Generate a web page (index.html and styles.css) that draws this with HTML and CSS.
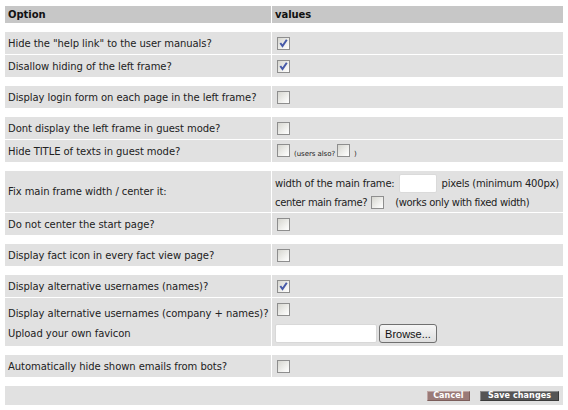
FILE: index.html
```html
<!DOCTYPE html>
<html lang="en">
<head>
<meta charset="UTF-8">
<title>Options</title>
<link rel="stylesheet" href="styles.css">
</head>
<body>

<form id="optionsForm">
<table class="settings">
    <colgroup><col class="col-opt"><col></colgroup>
    <tr class="head"><th>Option</th><th>values</th></tr>
    <tr class="gap"><td colspan="2"></td></tr>
    <tr><td>Hide the "help link" to the user manuals?</td><td><input type="checkbox" checked></td></tr>
    <tr><td>Disallow hiding of the left frame?</td><td><input type="checkbox" checked></td></tr>
    <tr class="gap"><td colspan="2"></td></tr>
    <tr><td>Display login form on each page in the left frame?</td><td><input type="checkbox"></td></tr>
    <tr class="gap"><td colspan="2"></td></tr>
    <tr><td>Dont display the left frame in guest mode?</td><td><input type="checkbox"></td></tr>
    <tr><td>Hide TITLE of texts in guest mode?</td><td><input type="checkbox"><span class="tiny">(users also?</span><input type="checkbox" class="cb-tiny"><span class="tiny">)</span></td></tr>
    <tr class="gap"><td colspan="2"></td></tr>
    <tr>
        <td>Fix main frame width / center it:</td>
        <td class="stack stack-frame">
            <div class="line line-width">width of the main frame:<input type="text" class="num">pixels (minimum 400px)</div>
            <div class="line line-short">center main frame?<input type="checkbox" class="cb-inline"><span class="hint">(works only with fixed width)</span></div>
        </td>
    </tr>
    <tr><td>Do not center the start page?</td><td><input type="checkbox"></td></tr>
    <tr class="gap"><td colspan="2"></td></tr>
    <tr><td>Display fact icon in every fact view page?</td><td><input type="checkbox"></td></tr>
    <tr class="gap"><td colspan="2"></td></tr>
    <tr><td>Display alternative usernames (names)?</td><td><input type="checkbox" checked></td></tr>
    <tr>
        <td class="stack">
            <div class="line">Display alternative usernames (company + names)?</div>
            <div class="line line-upload">Upload your own favicon</div>
        </td>
        <td class="stack">
            <div class="line"><input type="checkbox"></div>
            <div class="line line-file"><input type="text" class="file-name"><button type="button" class="browse">Browse...</button></div>
        </td>
    </tr>
    <tr class="gap"><td colspan="2"></td></tr>
    <tr><td>Automatically hide shown emails from bots?</td><td><input type="checkbox"></td></tr>
    <tr class="gap"><td colspan="2"></td></tr>
    <tr class="actions">
        <td colspan="2">
            <button type="reset" class="btn btn-cancel">Cancel</button>
            <button type="submit" class="btn btn-save">Save changes</button>
        </td>
    </tr>
</table>
</form>

</body>
</html>
```

FILE: styles.css
```css
body {
    margin: 5px 4px;
    font-family: "DejaVu Sans", Verdana, sans-serif;
    font-size: 10px;
    letter-spacing: -0.06px;
    color: #222;
    background: #fff;
}
.settings {
    width: 100%;
    table-layout: fixed;
    border-collapse: separate;
    border-spacing: 1px;
}
.col-opt {
    width: 266px;
}
.settings th,
.settings td {
    padding: 0 3px;
    background: #e1e1e1;
    text-align: left;
    vertical-align: middle;
    white-space: nowrap;
    height: 22px;
}
.settings .head th {
    background: #c7c7c7;
    color: #111;
    font-weight: bold;
    height: 17px;
}
.settings .gap td {
    background: none;
    height: 7px;
    padding: 0;
}

/* checkboxes drawn like the old grey ones */
input[type="checkbox"] {
    appearance: none;
    -webkit-appearance: none;
    box-sizing: border-box;
    width: 13px;
    height: 13px;
    margin: 0 0 0 2px;
    border: 1px solid #8e8e8e;
    background: linear-gradient(135deg, #d6d6d0 0%, #f4f4f2 70%, #fff 100%);
    vertical-align: middle;
}
input[type="checkbox"]:checked {
    background-image: url("data:image/svg+xml,%3Csvg xmlns='http://www.w3.org/2000/svg' width='11' height='11'%3E%3Cpolyline points='2.3,5 4.5,8 8.8,1.8' fill='none' stroke='%234659a8' stroke-width='2'/%3E%3C/svg%3E"),
        linear-gradient(135deg, #d6d6d0 0%, #f4f4f2 70%, #fff 100%);
}
.tiny {
    font-size: 7px;
    margin-left: 4px;
    vertical-align: -2px;
}
.cb-tiny {
    margin-left: 5px;
}

.stack {
    vertical-align: top;
}
.settings td.stack-frame {
    vertical-align: top;
    padding-top: 2px;
}
.line {
    display: flex;
    align-items: center;
    height: 22px;
}
.stack-frame .line {
    height: 20px;
}
.stack-frame .line-width {
    letter-spacing: -0.2px;
}
.stack-frame .line-short {
    height: 19px;
    letter-spacing: -0.35px;
}
.line-upload {
    height: 18px;
}
.line-file {
    height: 26px;
    align-items: flex-start;
    padding-top: 4px;
    box-sizing: border-box;
}

.num {
    box-sizing: border-box;
    width: 38px;
    height: 19px;
    margin: 0 5px 0 4px;
    border: 1px solid #dadada;
    border-radius: 2px;
    background: #fff;
}
.cb-inline {
    margin: 0 0 0 4px !important;
}
.hint {
    margin-left: 11px;
}
.file-name {
    box-sizing: border-box;
    width: 102px;
    height: 19px;
    margin: 0 2px 0 0;
    border: 1px solid #d8d8d8;
    border-radius: 2px;
    background: #fff;
}
.browse {
    box-sizing: border-box;
    width: 58px;
    height: 19px;
    padding: 0;
    border: 1px solid #707070;
    border-radius: 3px;
    background: linear-gradient(#f6f6f6, #dedede);
    font-family: "Liberation Sans", Arial, sans-serif;
    font-size: 11px;
    letter-spacing: 0;
    color: #111;
}

.settings .actions td {
    height: 19px;
    text-align: right;
    padding: 0 4px 0 0;
}
.btn {
    box-sizing: border-box;
    height: 10px;
    padding: 0;
    border: 1px solid;
    font-family: "DejaVu Sans", Verdana, sans-serif;
    font-size: 8px;
    font-weight: bold;
    line-height: 8px;
    letter-spacing: 0.1px;
    color: #fff;
    vertical-align: middle;
    cursor: pointer;
}
.btn-cancel {
    width: 43px;
    margin-right: 7px;
    background: #9a7a77;
    border-color: #bfa6a4 #7c5e5b #7c5e5b #bfa6a4;
}
.btn-save {
    width: 79px;
    background: #555;
    border-color: #8a8a8a #3a3a3a #3a3a3a #8a8a8a;
}
```
